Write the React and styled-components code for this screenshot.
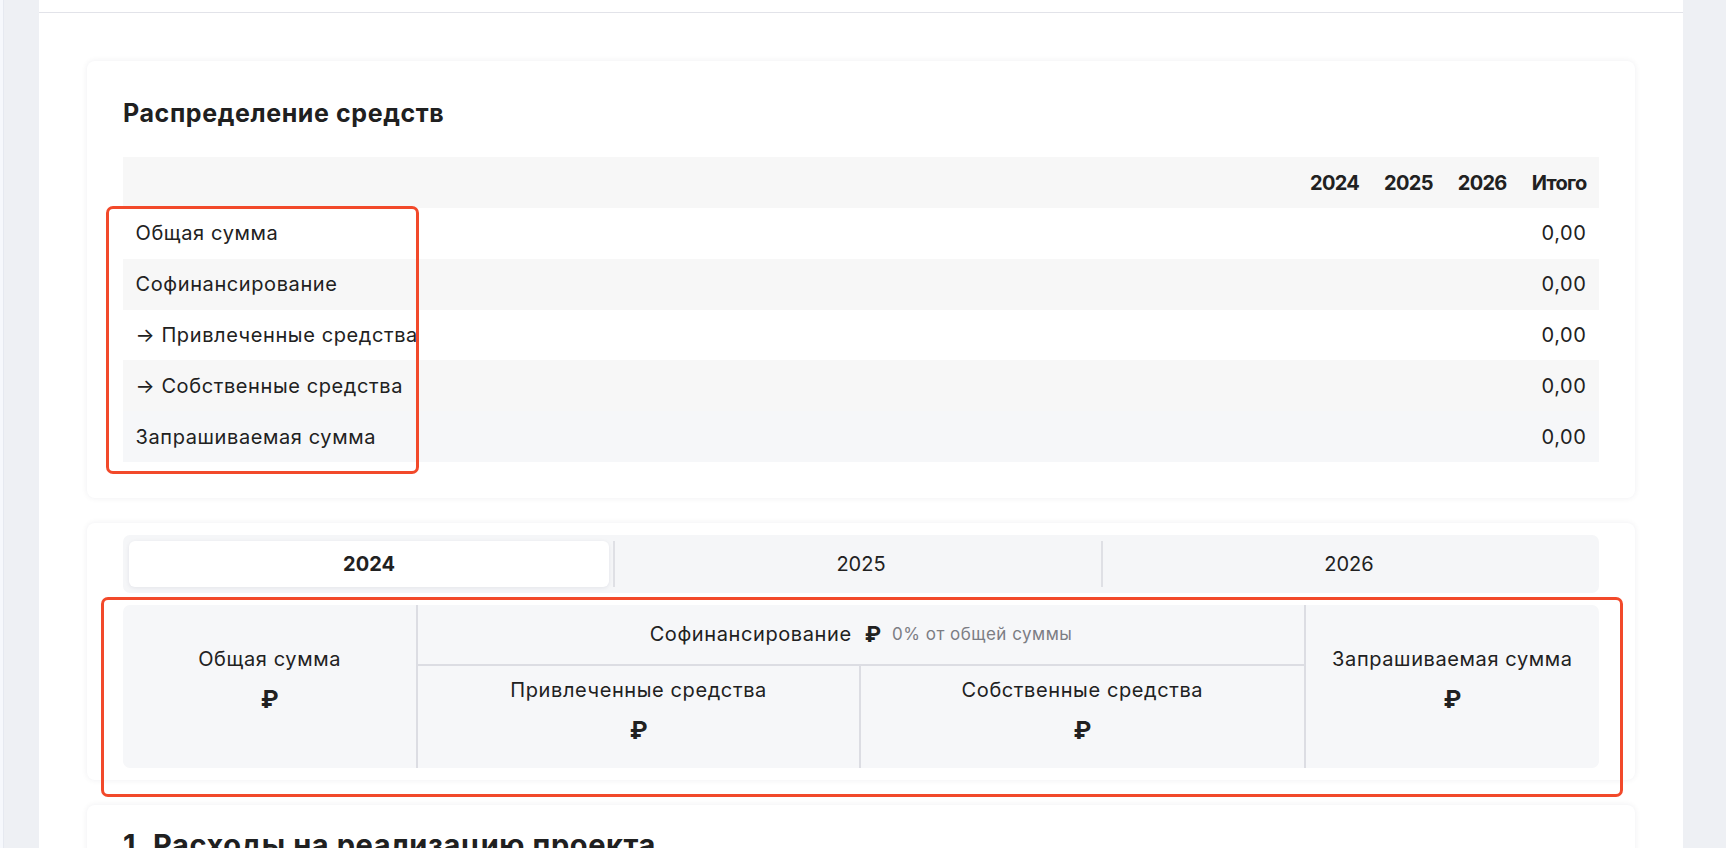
import React, { useState } from 'react';
import styled, { createGlobalStyle } from 'styled-components';

const years = ['2024', '2025', '2026'];

const rows = [
    { label: 'Общая сумма', total: '0,00' },
    { label: 'Софинансирование', total: '0,00' },
    { label: '→ Привлеченные средства', total: '0,00' },
    { label: '→ Собственные средства', total: '0,00' },
    { label: 'Запрашиваемая сумма', total: '0,00', hover: true },
];

function App() {
    const [year, setYear] = useState('2024');

    return (
        <>
            <GlobalStyle />
            <Page>
                <EdgeStrip />
                <Rail />
                <Main>
                    <TopBar />
                    <Content>
                        <Card $pad="36px">
                            <Title>Распределение средств</Title>
                            <Table>
                                <thead>
                                    <tr>
                                        <HeadCell $wide />
                                        {years.map((y) => (
                                            <HeadCell key={y}>{y}</HeadCell>
                                        ))}
                                        <HeadCell>Итого</HeadCell>
                                    </tr>
                                </thead>
                                <tbody>
                                    {rows.map((r, i) => (
                                        <Row key={r.label} $striped={i % 2 === 1} $hover={r.hover}>
                                            <Cell>{r.label}</Cell>
                                            {years.map((y) => (
                                                <Cell key={y} $num />
                                            ))}
                                            <Cell $num>{r.total}</Cell>
                                        </Row>
                                    ))}
                                </tbody>
                            </Table>
                        </Card>

                        <Card $pad="12px 36px">
                            <Tabs>
                                {years.map((y, i) => (
                                    <Tab
                                        key={y}
                                        $active={year === y}
                                        $divider={i > 0}
                                        onClick={() => setYear(y)}
                                    >
                                        {y}
                                    </Tab>
                                ))}
                            </Tabs>
                            <SumGrid>
                                <SumCell $area="total" $right>
                                    <SumLabel>Общая сумма</SumLabel>
                                    <SumValue>₽</SumValue>
                                </SumCell>
                                <CofinHead>
                                    <span>Софинансирование</span>
                                    <Rub>₽</Rub>
                                    <Hint>0% от общей суммы</Hint>
                                </CofinHead>
                                <SumCell $area="attracted" $right>
                                    <SumLabel>Привлеченные средства</SumLabel>
                                    <SumValue>₽</SumValue>
                                </SumCell>
                                <SumCell $area="own">
                                    <SumLabel>Собственные средства</SumLabel>
                                    <SumValue>₽</SumValue>
                                </SumCell>
                                <SumCell $area="requested" $left>
                                    <SumLabel>Запрашиваемая сумма</SumLabel>
                                    <SumValue>₽</SumValue>
                                </SumCell>
                            </SumGrid>
                        </Card>

                        <Card $pad="24px 36px">
                            <Title $big>1. Расходы на реализацию проекта</Title>
                            <Spacer />
                        </Card>
                    </Content>
                </Main>
                <Rail $right />

                <Mark $x={106} $y={206} $w={313} $h={268} />
                <Mark $x={101} $y={597} $w={1522} $h={200} />
            </Page>
        </>
    );
}
export default App;

const GlobalStyle = createGlobalStyle`
    html, body {
        margin: 0;
        padding: 0;
        background: #eef0f4;
        overflow: hidden;
    }
    body {
        font-family: Inter, "Noto Sans", "DejaVu Sans", sans-serif;
        color: #212121;
        letter-spacing: 0.6px;
    }
`;

const Page = styled.div`
    position: relative;
    display: flex;
    height: 848px;
    overflow: hidden;
`;

const EdgeStrip = styled.div`
    width: 3px;
    flex: none;
    background: #f6f8fc;
    border-right: 1px solid #e6e9f0;
`;

const Rail = styled.div`
    width: ${(p) => (p.$right ? '43px' : '35px')};
    flex: none;
    background: #eef0f4;
`;

const Main = styled.div`
    flex: 1;
    background: #ffffff;
    display: flex;
    flex-direction: column;
    min-width: 0;
`;

const TopBar = styled.div`
    height: 12px;
    flex: none;
    border-bottom: 1px solid #e2e3e9;
`;

const Content = styled.div`
    padding: 48px 48px 0;
    display: flex;
    flex-direction: column;
    gap: 25px;
`;

const Card = styled.section`
    background: #ffffff;
    border-radius: 8px;
    box-shadow: 0 0 6px rgba(20, 30, 60, 0.07);
    padding: ${(p) => p.$pad};
`;

const Title = styled.h2`
    margin: 0 0 ${(p) => (p.$big ? '0' : '28px')};
    font-size: ${(p) => (p.$big ? '29px' : '25px')};
    line-height: 32px;
    font-weight: 700;
    color: #202020;
`;

const Spacer = styled.div`
    height: 200px;
`;

const Table = styled.table`
    width: 100%;
    border-collapse: collapse;
    font-size: 20px;
`;

const HeadCell = styled.th`
    height: 51px;
    padding: 0 12.5px;
    background: #f7f7f7;
    font-weight: 700;
    text-align: right;
    letter-spacing: -0.7px;
    width: ${(p) => (p.$wide ? '100%' : 'auto')};
    white-space: nowrap;
`;

const Row = styled.tr`
    background: ${(p) => (p.$hover ? '#f6f7f9' : p.$striped ? '#f7f7f7' : '#ffffff')};
`;

const Cell = styled.td`
    height: 50.8px;
    padding: 0 12.5px;
    text-align: ${(p) => (p.$num ? 'right' : 'left')};
    white-space: nowrap;
`;

const Tabs = styled.div`
    display: grid;
    grid-template-columns: repeat(3, 1fr);
    padding: 6px;
    background: #f5f6f8;
    border-radius: 7px;
    margin-bottom: 12px;
`;

const Tab = styled.button`
    position: relative;
    height: 46px;
    border: none;
    margin: 0 ${(p) => (p.$active ? '8px' : '0')} 0 0;
    background: ${(p) => (p.$active ? '#ffffff' : 'transparent')};
    border-radius: 6px;
    box-shadow: ${(p) => (p.$active ? '0 1px 4px rgba(20, 30, 60, 0.08)' : 'none')};
    font-family: inherit;
    font-size: 20px;
    letter-spacing: 0;
    font-weight: ${(p) => (p.$active ? 700 : 400)};
    color: #212121;
    cursor: pointer;

    &::before {
        content: '';
        display: ${(p) => (p.$divider ? 'block' : 'none')};
        position: absolute;
        left: -4px;
        top: 0;
        bottom: 0;
        width: 2px;
        background: #dfe0e5;
    }
`;

const SumGrid = styled.div`
    display: grid;
    grid-template-columns: 20% 30% 30% 20%;
    grid-template-rows: 61px 102px;
    grid-template-areas:
        'total head head requested'
        'total attracted own requested';
    background: #f6f7f9;
    border-radius: 7px;
`;

const SumCell = styled.div`
    grid-area: ${(p) => p.$area};
    display: flex;
    flex-direction: column;
    align-items: center;
    justify-content: center;
    padding-bottom: 11px;
    border-right: ${(p) => (p.$right ? '2px solid #dcdde3' : 'none')};
    border-left: ${(p) => (p.$left ? '2px solid #dcdde3' : 'none')};
`;

const SumLabel = styled.div`
    font-size: 20px;
    line-height: 30px;
    margin-bottom: 9px;
`;

const SumValue = styled.div`
    font-size: 24px;
    line-height: 34px;
    font-weight: 700;
    letter-spacing: 0;
`;

const CofinHead = styled.div`
    grid-area: head;
    display: flex;
    align-items: center;
    justify-content: center;
    font-size: 20px;
    border-bottom: 2px solid #dcdde3;
`;

const Rub = styled.span`
    font-weight: 700;
    font-size: 22px;
    letter-spacing: 0;
    margin: 0 11px 0 13px;
`;

const Hint = styled.span`
    font-size: 17px;
    letter-spacing: 0.5px;
    color: #7c7d84;
`;

const Mark = styled.div`
    position: absolute;
    left: ${(p) => p.$x}px;
    top: ${(p) => p.$y}px;
    width: ${(p) => p.$w}px;
    height: ${(p) => p.$h}px;
    box-sizing: border-box;
    border: 3px solid #f2492a;
    border-radius: 7px;
    pointer-events: none;
`;
